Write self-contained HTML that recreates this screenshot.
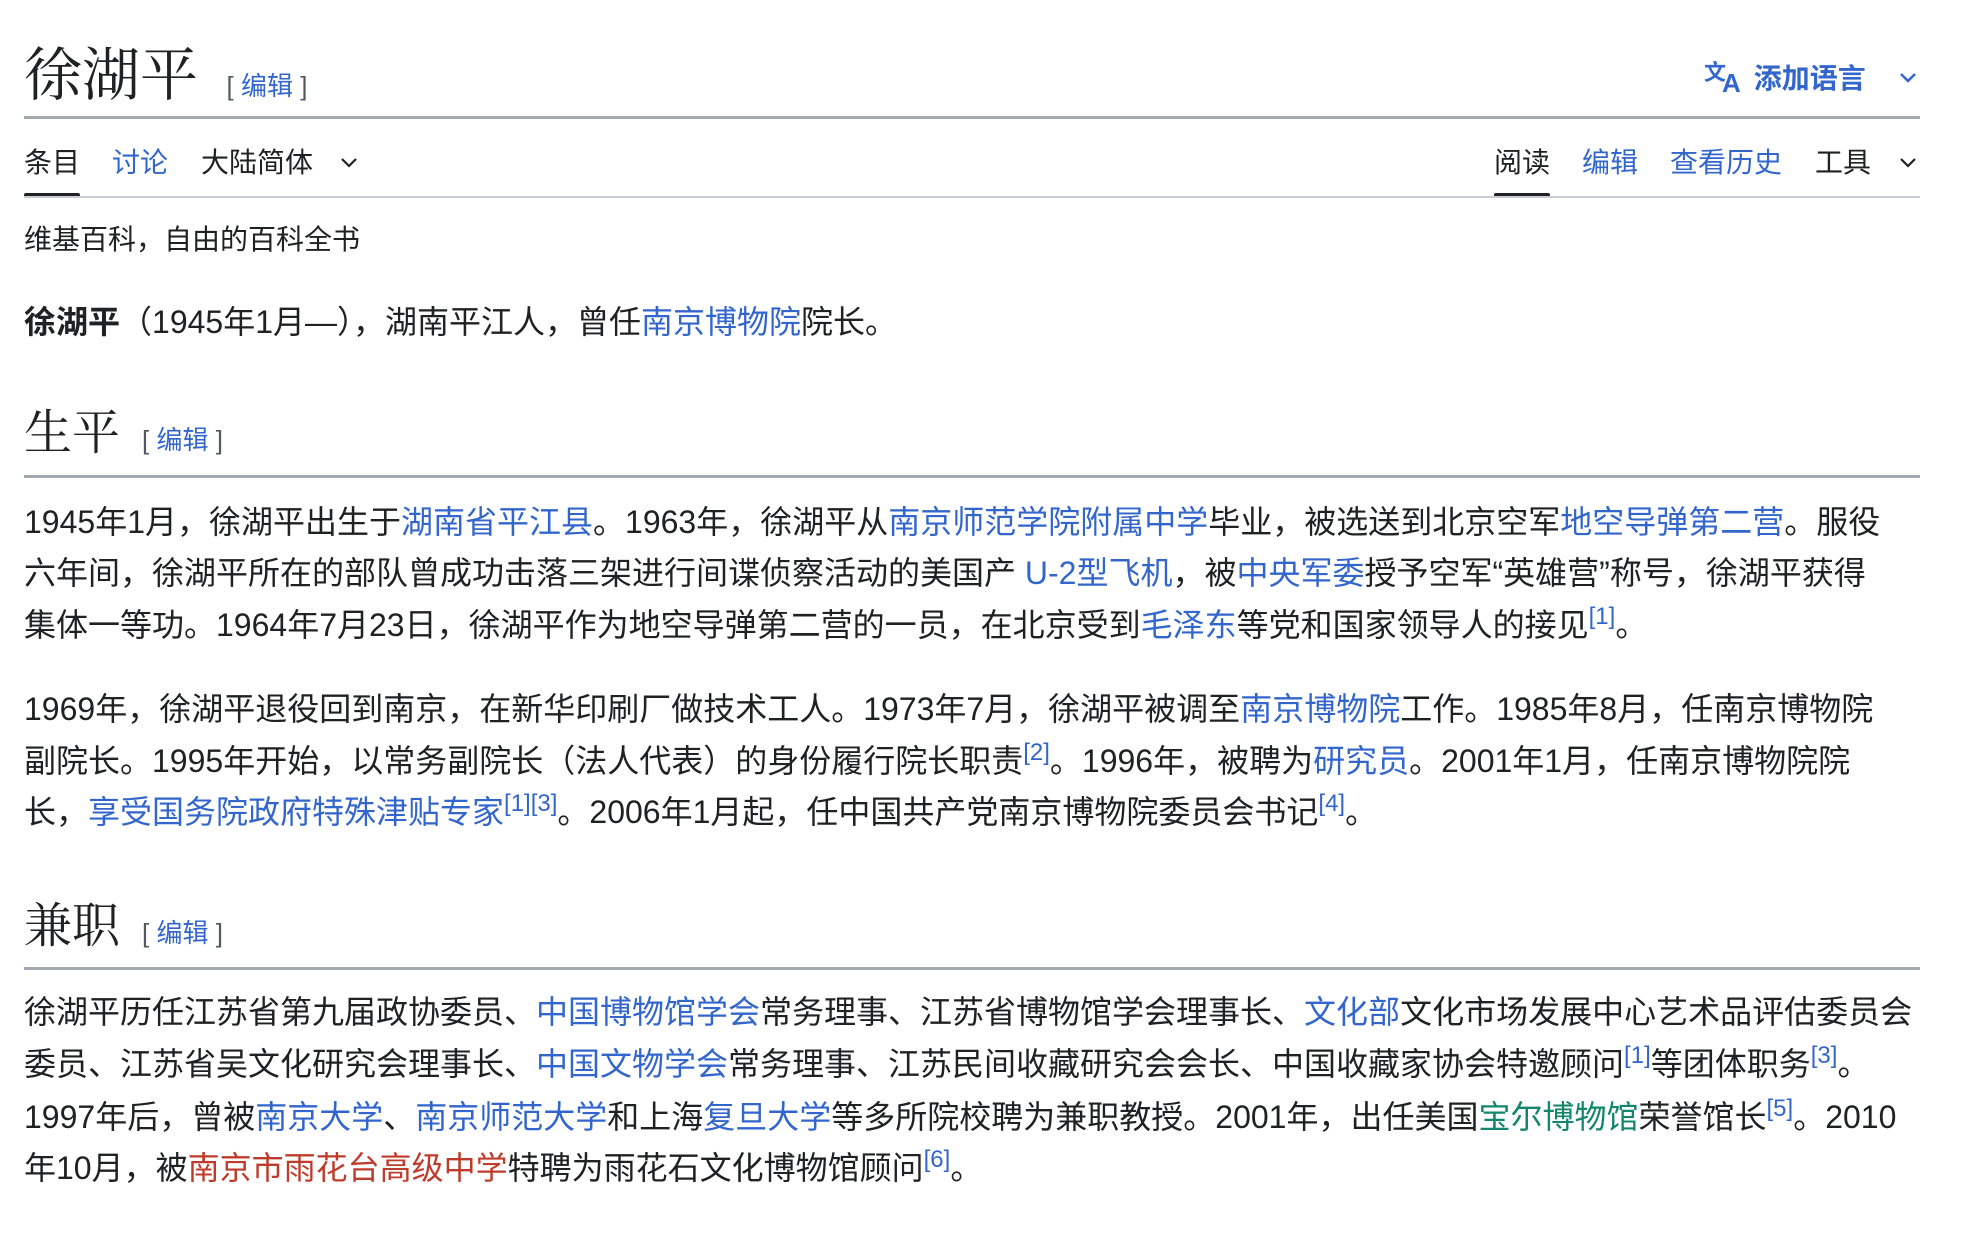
<!DOCTYPE html>
<html><head><meta charset="utf-8"><style>
html,body{margin:0;padding:0;background:#fff;width:1972px;height:1257px;overflow:hidden}
body{font-family:"Liberation Sans","Noto Sans CJK SC",sans-serif;color:#202122;position:relative}
.a{position:absolute;white-space:nowrap}
a{color:#3366cc;text-decoration:none}
.red{color:#bf3c2c}
.grn{color:#14866d}
sup{font-size:24px;vertical-align:0;position:relative;top:-12px;color:#3366cc;line-height:0}
.l{font-size:32px;line-height:52px;height:52px;left:24px}
.rule{position:absolute;left:24px;width:1896px;height:2px;background:#a2a9b1}
.h{font-family:"Liberation Serif","Noto Serif CJK SC",serif;font-weight:400}
.ed{font-family:"Liberation Sans","Noto Sans CJK SC",sans-serif;font-size:26px;color:#54595d}
.ed a{color:#3366cc}
.tab{font-size:28px;line-height:40px;top:143px}
</style></head><body>
<div class="a h" style="left:24px;top:36px;font-size:58px;line-height:80px">徐湖平 <span class="ed" style="margin-left:14px">[ <a>编辑</a> ]</span></div>
<div class="a" style="left:1704px;top:58px;font-size:28px;line-height:42px;color:#3366cc;font-weight:bold">
<svg width="42" height="36" viewBox="0 0 42 36" style="vertical-align:-6px"><text x="0" y="22" font-size="22" fill="#3366cc" font-family="Noto Sans CJK SC" font-weight="bold">文</text><text x="18" y="34" font-size="26" fill="#3366cc" font-family="Liberation Sans" font-weight="bold">A</text></svg>&nbsp;添加语言</div>
<svg class="a" style="left:1898px;top:70px" width="20" height="14" viewBox="0 0 20 14"><path d="M3 4 L10 11 L17 4" fill="none" stroke="#3366cc" stroke-width="2.5"/></svg>
<div class="rule" style="top:116px;height:3px"></div>

<div class="a tab" style="left:24px">条目</div>
<div style="position:absolute;left:24px;top:193px;width:56px;height:4px;background:#202122;border-radius:2px"></div>
<div class="a tab" style="left:112px;color:#3366cc">讨论</div>
<div class="a tab" style="left:201px">大陆简体</div>
<svg class="a" style="left:339px;top:155px" width="20" height="14" viewBox="0 0 20 14"><path d="M3 4 L10 11 L17 4" fill="none" stroke="#202122" stroke-width="2.2"/></svg>
<div class="a tab" style="left:1494px">阅读</div>
<div style="position:absolute;left:1494px;top:193px;width:56px;height:4px;background:#202122;border-radius:2px"></div>
<div class="a tab" style="left:1582px;color:#3366cc">编辑</div>
<div class="a tab" style="left:1670px;color:#3366cc">查看历史</div>
<div class="a tab" style="left:1815px">工具</div>
<svg class="a" style="left:1898px;top:155px" width="20" height="14" viewBox="0 0 20 14"><path d="M3 4 L10 11 L17 4" fill="none" stroke="#202122" stroke-width="2.2"/></svg>
<div class="rule" style="top:196px;background:#c8ccd1"></div>

<div class="a" style="left:24px;top:222px;font-size:28px;line-height:36px">维基百科，自由的百科全书</div>
<div class="a l" style="top:296px"><b>徐湖平</b>（1945年1月—），湖南平江人，曾任<a>南京博物院</a>院长。</div>

<div class="a h" style="left:24px;top:402px;font-size:48px;line-height:64px">生平 <span class="ed" style="margin-left:10px">[ <a>编辑</a> ]</span></div>
<div class="rule" style="top:475px;height:3px"></div>
<div class="a l" style="top:496px">1945年1月，徐湖平出生于<a>湖南省平江县</a>。1963年，徐湖平从<a>南京师范学院附属中学</a>毕业，被选送到北京空军<a>地空导弹第二营</a>。服役</div>
<div class="a l" style="top:547px">六年间，徐湖平所在的部队曾成功击落三架进行间谍侦察活动的美国产 <a>U-2型飞机</a>，被<a>中央军委</a>授予空军“英雄营”称号，徐湖平获得</div>
<div class="a l" style="top:599px">集体一等功。1964年7月23日，徐湖平作为地空导弹第二营的一员，在北京受到<a>毛泽东</a>等党和国家领导人的接见<sup>[1]</sup>。</div>

<div class="a l" style="top:683px">1969年，徐湖平退役回到南京，在新华印刷厂做技术工人。1973年7月，徐湖平被调至<a>南京博物院</a>工作。1985年8月，任南京博物院</div>
<div class="a l" style="top:735px">副院长。1995年开始，以常务副院长（法人代表）的身份履行院长职责<sup>[2]</sup>。1996年，被聘为<a>研究员</a>。2001年1月，任南京博物院院</div>
<div class="a l" style="top:786px">长，<a>享受国务院政府特殊津贴专家</a><sup>[1][3]</sup>。2006年1月起，任中国共产党南京博物院委员会书记<sup>[4]</sup>。</div>

<div class="a h" style="left:24px;top:895px;font-size:48px;line-height:64px">兼职 <span class="ed" style="margin-left:10px">[ <a>编辑</a> ]</span></div>
<div class="rule" style="top:967px;height:3px"></div>
<div class="a l" style="top:986px">徐湖平历任江苏省第九届政协委员、<a>中国博物馆学会</a>常务理事、江苏省博物馆学会理事长、<a>文化部</a>文化市场发展中心艺术品评估委员会</div>
<div class="a l" style="top:1038px">委员、江苏省吴文化研究会理事长、<a>中国文物学会</a>常务理事、江苏民间收藏研究会会长、中国收藏家协会特邀顾问<sup>[1]</sup>等团体职务<sup>[3]</sup>。</div>
<div class="a l" style="top:1091px">1997年后，曾被<a>南京大学</a>、<a>南京师范大学</a>和上海<a>复旦大学</a>等多所院校聘为兼职教授。2001年，出任美国<a class="grn">宝尔博物馆</a>荣誉馆长<sup>[5]</sup>。2010</div>
<div class="a l" style="top:1142px">年10月，被<a class="red">南京市雨花台高级中学</a>特聘为雨花石文化博物馆顾问<sup>[6]</sup>。</div>
</body></html>
